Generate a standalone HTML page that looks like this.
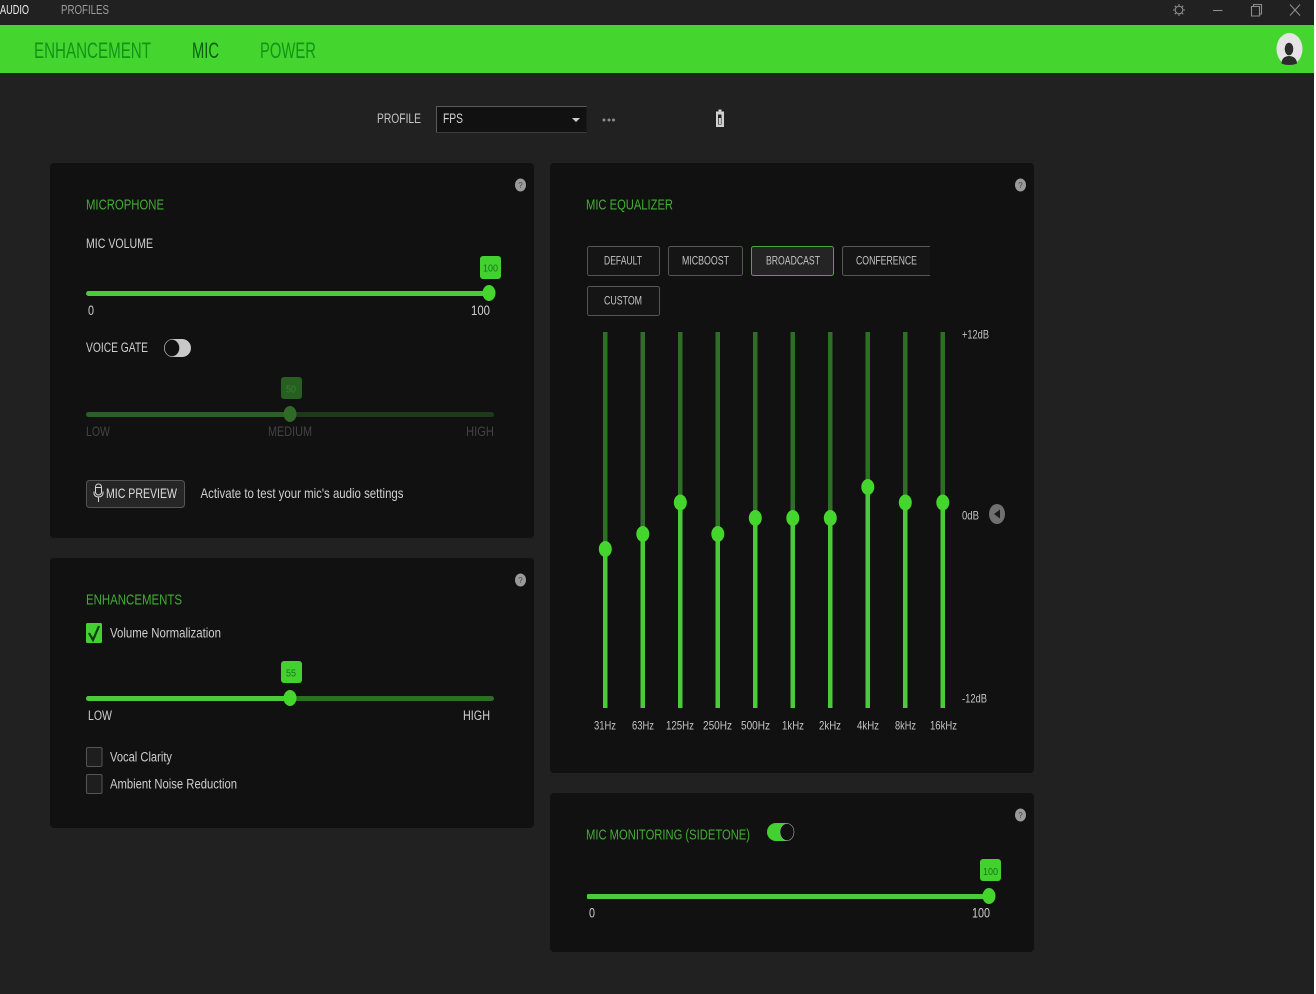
<!DOCTYPE html>
<html lang="en">
<head>
<meta charset="utf-8">
<title>Mic</title>
<style>
html,body{margin:0;padding:0;width:1316px;height:994px;overflow:hidden;background:#212121}
svg{display:block}
text{font-family:"Liberation Sans",sans-serif;filter:blur(.25px)}
.t{fill:#cfcfcf;font-size:13.5px}
.h{fill:#43ad34;font-size:15px}
.s{fill:#c4c4c4;font-size:12px}
.d{fill:#434343;font-size:14px}
.b{fill:#127a17;font-size:10.5px}
.n{fill:#119517;font-size:22px}
</style>
</head>
<body>
<svg width="1316" height="994" viewBox="0 0 1316 994" xmlns="http://www.w3.org/2000/svg">
<rect width="1316" height="994" fill="#212121"/>
<rect x="0" y="25" width="1316" height="48" fill="#44d62f"/>
<rect x="1314" y="0" width="2" height="994" fill="#fff"/>

<!-- top bar -->
<text x="0" y="14" font-size="12.5" fill="#eee" textLength="29" lengthAdjust="spacingAndGlyphs">AUDIO</text>
<text x="61" y="14" font-size="12.5" fill="#9c9c9c" textLength="48" lengthAdjust="spacingAndGlyphs">PROFILES</text>
<g fill="none" stroke="#8c8c8c" stroke-width="1.1">
<circle cx="1179" cy="10" r="3.8"/>
<path d="M1179 4v1.8M1179 14.2v1.8M1173 10h1.8M1183.2 10h1.8M1174.8 5.8l1.3 1.3M1181.9 12.9l1.3 1.3M1174.8 14.2l1.3-1.3M1181.9 7.100l1.3-1.3"/>
<path d="M1213 10.500h9.500"/>
<path d="M1251.500 6.500h8v9.500h-8zM1253.500 6.500v-2h8v9.500h-2"/>
<path d="M1290 4.500l10 11M1300 4.500l-10 11"/>
</g>
<ellipse cx="1289.500" cy="49" rx="13" ry="16" fill="#e4e4e4"/>
<ellipse cx="1289" cy="49" rx="4.300" ry="6.300" fill="#2b2b2b"/>
<path d="M1281.500 63.500c0-5 3.500-7.500 7.500-7.500s8 2.500 8 7.500c-2 1-5 1.500-8 1.500s-5.500-.5-7.500-1.500z" fill="#2b2b2b"/>

<!-- nav -->
<text class="n" x="34" y="58" textLength="117" lengthAdjust="spacingAndGlyphs">ENHANCEMENT</text>
<text class="n" x="192" y="58" style="fill:#0a5f12" textLength="27" lengthAdjust="spacingAndGlyphs">MIC</text>
<text class="n" x="260" y="58" textLength="56" lengthAdjust="spacingAndGlyphs">POWER</text>

<!-- profile -->
<text x="377" y="123" font-size="13.500" fill="#c4c4c4" textLength="44" lengthAdjust="spacingAndGlyphs">PROFILE</text>
<rect x="436.500" y="106.500" width="150" height="26" fill="#111"/>
<path d="M436.500 132.500v-26h150" fill="none" stroke="#5a5a5a"/>
<path d="M436.500 132.500h150" stroke="#3c3c3c"/>
<text x="443" y="123" font-size="13.500" fill="#d4d4d4" textLength="20" lengthAdjust="spacingAndGlyphs">FPS</text>
<path d="M572 118h8l-4 4z" fill="#cfcfcf"/>
<g fill="#8e8e8e"><circle cx="604" cy="120" r="1.500"/><circle cx="609" cy="120" r="1.500"/><circle cx="613.500" cy="120" r="1.500"/></g>
<path d="M718.500 109.500h3v2h2.500v15.500h-8v-15.500h2.500z" fill="#d0d0d0"/>
<rect x="718" y="114.500" width="3.500" height="10" fill="#222"/>
<rect x="718.700" y="118" width="2.200" height="6" fill="#d0d0d0"/>

<!-- panels -->
<rect x="50" y="163" width="484" height="375" rx="4" fill="#111"/>
<rect x="50" y="558" width="484" height="270" rx="4" fill="#111"/>
<rect x="550" y="163" width="484" height="610" rx="4" fill="#111"/>
<rect x="550" y="793" width="484" height="159" rx="4" fill="#111"/>

<!-- help icons -->
<g fill="#9a9a9a">
<ellipse cx="520.500" cy="185" rx="5.500" ry="6.500"/>
<ellipse cx="520.500" cy="580" rx="5.500" ry="6.500"/>
<ellipse cx="1020.500" cy="185" rx="5.500" ry="6.500"/>
<ellipse cx="1020.500" cy="815" rx="5.500" ry="6.500"/>
</g>
<g font-size="8" fill="#444" text-anchor="middle">
<text x="520.500" y="188">?</text><text x="520.500" y="583">?</text>
<text x="1020.500" y="188">?</text><text x="1020.500" y="818">?</text>
</g>

<!-- microphone -->
<text class="h" x="86" y="209.300" textLength="78" lengthAdjust="spacingAndGlyphs">MICROPHONE</text>
<text class="t" x="86" y="248" textLength="67" lengthAdjust="spacingAndGlyphs">MIC VOLUME</text>
<rect x="480" y="256" width="21" height="23" rx="3" fill="#43d12f"/>
<text class="b" x="483" y="271.500" textLength="15" lengthAdjust="spacingAndGlyphs">100</text>
<rect x="86" y="291" width="406" height="5" rx="2.500" fill="#4ccb3a"/>
<ellipse cx="489" cy="293" rx="6.500" ry="8" fill="#44d62c"/>
<text class="t" x="88" y="315" textLength="6" lengthAdjust="spacingAndGlyphs">0</text>
<text class="t" x="471" y="315" textLength="19" lengthAdjust="spacingAndGlyphs">100</text>
<text class="t" x="86" y="352" textLength="62" lengthAdjust="spacingAndGlyphs">VOICE GATE</text>
<rect x="164" y="339" width="27" height="18" rx="9" fill="#c8c8c8"/>
<ellipse cx="172" cy="348" rx="7.500" ry="8.500" fill="#111" stroke="#aaa" stroke-width=".6"/>

<rect x="281" y="377" width="21" height="22" rx="3" fill="#275f20"/>
<text x="286" y="392.500" font-size="10.500" fill="#3c7d32" textLength="10" lengthAdjust="spacingAndGlyphs">50</text>
<rect x="86" y="412" width="408" height="5" rx="2.500" fill="#1d3a1b"/>
<rect x="86" y="412" width="204" height="5" rx="2.500" fill="#2a5f25"/>
<ellipse cx="290" cy="414" rx="6.500" ry="8" fill="#2f6a27"/>
<text class="d" x="86" y="436" textLength="24" lengthAdjust="spacingAndGlyphs">LOW</text>
<text class="d" x="268" y="436" textLength="44" lengthAdjust="spacingAndGlyphs">MEDIUM</text>
<text class="d" x="466" y="436" textLength="28" lengthAdjust="spacingAndGlyphs">HIGH</text>

<rect x="86.500" y="480.500" width="98" height="27" rx="3" fill="#262626" stroke="#555"/>
<g fill="none" stroke="#d8d8d8" stroke-width="1">
<rect x="95.500" y="484" width="6" height="11" rx="3"/>
<path d="M94 491.500v1.500c0 2.500 2 4 4.500 4s4.500-1.500 4.500-4v-1.500M98.500 497v5M96 487.500h5"/>
</g>
<text x="106" y="498" font-size="14" fill="#dcdcdc" textLength="71" lengthAdjust="spacingAndGlyphs">MIC PREVIEW</text>
<text x="200.500" y="498" font-size="14" fill="#cfcfcf" textLength="203" lengthAdjust="spacingAndGlyphs">Activate to test your mic's audio settings</text>

<!-- enhancements -->
<text class="h" x="86" y="604.300" textLength="96" lengthAdjust="spacingAndGlyphs">ENHANCEMENTS</text>
<rect x="86" y="623" width="16" height="20" rx="1.500" fill="#43d12f"/>
<path d="M89 633l4 7 6-14" fill="none" stroke="#0c3d10" stroke-width="2.200"/>
<text class="t" x="110" y="637.700" textLength="111" lengthAdjust="spacingAndGlyphs">Volume Normalization</text>
<rect x="281" y="661" width="21" height="22" rx="3" fill="#43d12f"/>
<text class="b" x="286" y="676.500" textLength="10" lengthAdjust="spacingAndGlyphs">55</text>
<rect x="86" y="696" width="408" height="5" rx="2.500" fill="#2f6e27"/>
<rect x="86" y="696" width="204" height="5" rx="2.500" fill="#4ccb3a"/>
<ellipse cx="290" cy="698" rx="6.500" ry="8" fill="#44d62c"/>
<text class="t" x="88" y="720" textLength="24" lengthAdjust="spacingAndGlyphs">LOW</text>
<text class="t" x="463" y="720" textLength="27" lengthAdjust="spacingAndGlyphs">HIGH</text>
<rect x="86.500" y="747.500" width="15.500" height="19" rx="1.500" fill="#1e1e1e" stroke="#555"/>
<rect x="86.500" y="774.500" width="15.500" height="19" rx="1.500" fill="#1e1e1e" stroke="#555"/>
<text class="t" x="110" y="761.700" textLength="62" lengthAdjust="spacingAndGlyphs">Vocal Clarity</text>
<text class="t" x="110" y="788.700" textLength="127" lengthAdjust="spacingAndGlyphs">Ambient Noise Reduction</text>

<!-- equalizer -->
<text class="h" x="586" y="209.300" textLength="87" lengthAdjust="spacingAndGlyphs">MIC EQUALIZER</text>
<g fill="#151515" stroke="#565656">
<rect x="587.500" y="246.500" width="72" height="29" rx="2"/>
<rect x="668.500" y="246.500" width="74" height="29" rx="2"/>
<rect x="587.500" y="286.500" width="72" height="29" rx="2"/>
</g>
<rect x="751.500" y="246.500" width="82" height="29" rx="2" fill="#242424" stroke="#4aa83c"/>
<path d="M930 246.500h-85.500a2 2 0 0 0-2 2v25a2 2 0 0 0 2 2h85.500" fill="#151515" stroke="#565656"/>
<text class="s" x="604" y="264.300" textLength="38" lengthAdjust="spacingAndGlyphs">DEFAULT</text>
<text class="s" x="682" y="264.300" textLength="47" lengthAdjust="spacingAndGlyphs">MICBOOST</text>
<text class="s" x="766" y="264.300" textLength="54" lengthAdjust="spacingAndGlyphs">BROADCAST</text>
<text class="s" x="856" y="264.300" textLength="61" lengthAdjust="spacingAndGlyphs">CONFERENCE</text>
<text class="s" x="604" y="304.300" textLength="38" lengthAdjust="spacingAndGlyphs">CUSTOM</text>

<g fill="#2f6e27">
<rect x="603" y="332" width="4.500" height="376"/><rect x="640.500" y="332" width="4.500" height="376"/>
<rect x="678" y="332" width="4.500" height="376"/><rect x="715.500" y="332" width="4.500" height="376"/>
<rect x="753" y="332" width="4.500" height="376"/><rect x="790.500" y="332" width="4.500" height="376"/>
<rect x="828" y="332" width="4.500" height="376"/><rect x="865.500" y="332" width="4.500" height="376"/>
<rect x="903" y="332" width="4.500" height="376"/><rect x="940.500" y="332" width="4.500" height="376"/>
</g>
<g fill="#4ccb3a">
<rect x="603" y="549" width="4.500" height="159"/><rect x="640.500" y="534" width="4.500" height="174"/>
<rect x="678" y="502" width="4.500" height="206"/><rect x="715.500" y="534" width="4.500" height="174"/>
<rect x="753" y="518" width="4.500" height="190"/><rect x="790.500" y="518" width="4.500" height="190"/>
<rect x="828" y="518" width="4.500" height="190"/><rect x="865.500" y="487" width="4.500" height="221"/>
<rect x="903" y="502" width="4.500" height="206"/><rect x="940.500" y="502" width="4.500" height="206"/>
</g>
<g fill="#44d62c">
<ellipse cx="605.300" cy="549" rx="6.500" ry="8"/><ellipse cx="642.800" cy="534" rx="6.500" ry="8"/>
<ellipse cx="680.300" cy="502.500" rx="6.500" ry="8"/><ellipse cx="717.800" cy="534" rx="6.500" ry="8"/>
<ellipse cx="755.300" cy="518" rx="6.500" ry="8"/><ellipse cx="792.800" cy="518" rx="6.500" ry="8"/>
<ellipse cx="830.300" cy="518" rx="6.500" ry="8"/><ellipse cx="867.800" cy="487" rx="6.500" ry="8"/>
<ellipse cx="905.300" cy="502.500" rx="6.500" ry="8"/><ellipse cx="942.800" cy="502.500" rx="6.500" ry="8"/>
</g>
<g fill="#c4c4c4" font-size="12">
<text x="594" y="729.400" textLength="22" lengthAdjust="spacingAndGlyphs">31Hz</text>
<text x="632" y="729.400" textLength="22" lengthAdjust="spacingAndGlyphs">63Hz</text>
<text x="666" y="729.400" textLength="28" lengthAdjust="spacingAndGlyphs">125Hz</text>
<text x="703" y="729.400" textLength="29" lengthAdjust="spacingAndGlyphs">250Hz</text>
<text x="741" y="729.400" textLength="29" lengthAdjust="spacingAndGlyphs">500Hz</text>
<text x="782" y="729.400" textLength="22" lengthAdjust="spacingAndGlyphs">1kHz</text>
<text x="819" y="729.400" textLength="22" lengthAdjust="spacingAndGlyphs">2kHz</text>
<text x="857" y="729.400" textLength="22" lengthAdjust="spacingAndGlyphs">4kHz</text>
<text x="895" y="729.400" textLength="21" lengthAdjust="spacingAndGlyphs">8kHz</text>
<text x="930" y="729.400" textLength="27" lengthAdjust="spacingAndGlyphs">16kHz</text>
<text x="962" y="338.400" textLength="27" lengthAdjust="spacingAndGlyphs">+12dB</text>
<text x="962" y="519.400" textLength="17" lengthAdjust="spacingAndGlyphs">0dB</text>
<text x="962" y="702.400" textLength="25" lengthAdjust="spacingAndGlyphs">-12dB</text>
</g>
<ellipse cx="997" cy="514" rx="8" ry="10" fill="#707070"/>
<path d="M1000 509.500v9l-6-4.500z" fill="#1c1c1c"/>

<!-- monitoring -->
<text class="h" x="586" y="839.300" textLength="164" lengthAdjust="spacingAndGlyphs">MIC MONITORING (SIDETONE)</text>
<rect x="767" y="823" width="27" height="18" rx="9" fill="#43d12f"/>
<ellipse cx="787" cy="832" rx="7" ry="8.500" fill="#111" stroke="#aaa" stroke-width=".6"/>
<rect x="980" y="859" width="21" height="22" rx="3" fill="#43d12f"/>
<text class="b" x="983" y="875" textLength="15" lengthAdjust="spacingAndGlyphs">100</text>
<rect x="587" y="894" width="406" height="5" rx="1" fill="#4ccb3a"/>
<ellipse cx="989" cy="896" rx="6.500" ry="8" fill="#44d62c"/>
<text class="t" x="589" y="917.500" textLength="6" lengthAdjust="spacingAndGlyphs">0</text>
<text class="t" x="972" y="917.500" textLength="18" lengthAdjust="spacingAndGlyphs">100</text>
</svg>
</body>
</html>
